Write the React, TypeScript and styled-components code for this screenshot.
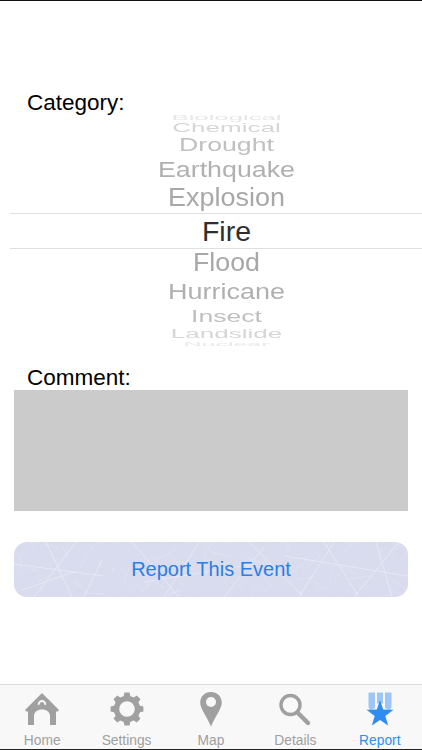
import styled, { createGlobalStyle } from "styled-components"
import type { ReactNode } from "react"

const GlobalStyle = createGlobalStyle`
  html, body {
    margin: 0;
    padding: 0;
    background: #fff;
    font-family: "Liberation Sans", Arial, sans-serif;
  }
`

const Page = styled.div`
  width: 422px;
  height: 750px;
  display: flex;
  flex-direction: column;
  overflow: hidden;
  border-top: 1px solid #111;
  box-sizing: border-box;
  background: #fff;
`

const Content = styled.main`
  flex: 1 1 auto;
  display: flex;
  flex-direction: column;
  padding-top: 89px;
`

const Label = styled.div`
  font-size: 22.5px;
  line-height: 26px;
  color: #000;
  padding-left: 27px;
`

const Picker = styled.div`
  margin: -3px 0 0 10px;
  display: flex;
  flex-direction: column;
`

const PickerRow = styled.div<{ $height: number; $selected?: boolean }>`
  height: ${(p) => p.$height}px;
  flex: 0 0 auto;
  box-sizing: border-box;
  display: flex;
  align-items: center;
  justify-content: center;
  padding-left: 21px;
  overflow: visible;
  ${(p) =>
    p.$selected &&
    `
    border-top: 1px solid #dfdfdf;
    border-bottom: 1px solid #dfdfdf;
  `}
`

const PickerText = styled.span<{ $size: number; $squash: number; $color: string }>`
  font-size: ${(p) => p.$size}px;
  line-height: 1;
  color: ${(p) => p.$color};
  white-space: nowrap;
  transform: scaleY(${(p) => p.$squash});
`

const CommentLabel = styled(Label)`
  margin: 17px 0 -1px;
`

const CommentBox = styled.div`
  height: 121px;
  margin: 0 14px;
  background: #cbcbcb;
`

const ReportButton = styled.button`
  position: relative;
  height: 55px;
  margin: 31px 14px 0;
  padding: 0;
  border: 0;
  border-radius: 13px;
  overflow: hidden;
  background: #d9dcee;
  color: #2b7fe2;
  font-family: inherit;
  font-size: 20px;
`

const Scratches = styled.svg`
  position: absolute;
  inset: 0;
  width: 100%;
  height: 100%;
`

const ButtonText = styled.span`
  position: relative;
`

const TabBar = styled.nav`
  flex: 0 0 auto;
  height: 66px;
  box-sizing: border-box;
  display: grid;
  grid-template-columns: repeat(5, 1fr);
  background: #f8f8f8;
  border-top: 1px solid #dcdcdc;
  border-bottom: 1px solid #222;
`

const Tab = styled.div<{ $active?: boolean }>`
  display: flex;
  flex-direction: column;
  align-items: center;
  padding-top: 7px;
  color: ${(p) => (p.$active ? "#2f8df2" : "#a0a0a0")};
`

const TabIcon = styled.svg`
  width: 36px;
  height: 36px;
  display: block;
`

const TabLabel = styled.span`
  margin-top: 5px;
  font-size: 13.8px;
  line-height: 16px;
`

const wheel = [
  { name: "Biological", height: 9, size: 25.7, squash: 0.26, color: "#e6e6e6" },
  { name: "Chemical", height: 12, size: 26, squash: 0.48, color: "#d6d6d6" },
  { name: "Drought", height: 23, size: 26.7, squash: 0.69, color: "#c0c0c0" },
  { name: "Earthquake", height: 25, size: 26.8, squash: 0.85, color: "#b0b0b0" },
  { name: "Explosion", height: 31, size: 27, squash: 0.95, color: "#a8a8a8" },
  { name: "Fire", height: 36, size: 28.5, squash: 1, color: "#2e2e2e", selected: true },
  { name: "Flood", height: 29, size: 26.8, squash: 0.93, color: "#a8a8a8" },
  { name: "Hurricane", height: 27, size: 27, squash: 0.83, color: "#b0b0b0" },
  { name: "Insect", height: 22, size: 26.6, squash: 0.64, color: "#c0c0c0" },
  { name: "Landslide", height: 14, size: 26, squash: 0.47, color: "#d6d6d6" },
  { name: "Nuclear", height: 7, size: 25, squash: 0.23, color: "#e8e8e8" },
]

// long scratches, then a lot of short ones picked by a small fixed sequence
const scratchLines = [
  "M20 55 L62 0", "M58 55 L32 0", "M70 55 L88 18", "M118 0 L165 55", "M150 55 L185 0",
  "M210 55 L250 5", "M235 0 L290 55", "M285 55 L320 0", "M310 0 L345 55", "M340 55 L385 0",
  "M0 22 L90 34", "M130 40 L240 22", "M270 14 L394 34", "M362 0 L378 55", "M8 48 L60 30",
  ...Array.from({ length: 46 }, (_, i) => {
    const x = (i * 67) % 394
    const y = (i * 23) % 55
    const dx = ((i * 37) % 50) - 25
    const dy = ((i * 41) % 40) - 20
    return `M${x} ${y} L${x + dx} ${y + dy}`
  }),
]

const HomeIcon = () => (
  <TabIcon viewBox="0 0 36 36">
    <path
      fill="currentColor"
      fillRule="evenodd"
      d="M18 1 L35 18 L33 20 L32 19 V33 H26 V24 C26 20 22.5 17.5 18 17.5 C13.5 17.5 10 20 10 24 V33 H4 V19 L3 20 L1 18 Z M18 8 C15.6 8 14 10 13.6 12.5 L15.2 13.2 C15.6 11.4 16.6 10 18 10 C19.4 10 20.4 11.4 20.8 13.2 L22.4 12.5 C22 10 20.4 8 18 8 Z"
    />
  </TabIcon>
)

const SettingsIcon = () => {
  const teeth = [0, 45, 90, 135, 180, 225, 270, 315]
  return (
    <TabIcon viewBox="0 0 36 36">
      <circle cx="18" cy="17" r="10.5" fill="none" stroke="currentColor" strokeWidth="5.4" />
      {teeth.map((a) => (
        <path key={a} d="M14.6 5 L15.4 0.6 H20.6 L21.4 5 Z" fill="currentColor" transform={`rotate(${a} 18 17)`} />
      ))}
    </TabIcon>
  )
}

const MapIcon = () => (
  <TabIcon viewBox="0 0 36 36">
    <path
      fill="currentColor"
      fillRule="evenodd"
      d="M18 0 C24.2 0 28.8 4.6 28.8 10.6 C28.8 17 22 25 18 34.5 C14 25 7.2 17 7.2 10.6 C7.2 4.6 11.8 0 18 0 Z M18 5 A5 5 0 1 0 18 15 A5 5 0 1 0 18 5 Z"
    />
  </TabIcon>
)

const DetailsIcon = () => (
  <TabIcon viewBox="0 0 36 36">
    <circle cx="13.5" cy="13" r="9.5" fill="none" stroke="currentColor" strokeWidth="3.4" />
    <path d="M20.5 20.5 L31 31" stroke="currentColor" strokeWidth="4.4" strokeLinecap="round" />
  </TabIcon>
)

const ReportIcon = () => (
  <TabIcon viewBox="0 0 36 36">
    <g fill="#9cc6f7">
      <path d="M6.5 0.5 H13 V16 L8.5 18 L6.5 15 Z" />
      <rect x="15" y="0.5" width="6" height="11" />
      <path d="M23 0.5 H29.5 V15 L27.5 18 L23 16 Z" />
    </g>
    <path
      fill="currentColor"
      d="M18 8 L21.2 17.5 L31.5 17.8 L23.3 24 L26.2 33.5 L18 28 L9.8 33.5 L12.7 24 L4.5 17.8 L14.8 17.5 Z"
    />
  </TabIcon>
)

const tabs: { label: string; icon: ReactNode; active?: boolean }[] = [
  { label: "Home", icon: <HomeIcon /> },
  { label: "Settings", icon: <SettingsIcon /> },
  { label: "Map", icon: <MapIcon /> },
  { label: "Details", icon: <DetailsIcon /> },
  { label: "Report", icon: <ReportIcon />, active: true },
]

function App() {
  return (
    <Page>
      <GlobalStyle />
      <Content>
        <Label>Category:</Label>
        <Picker>
          {wheel.map((w) => (
            <PickerRow key={w.name} $height={w.height} $selected={w.selected}>
              <PickerText $size={w.size} $squash={w.squash} $color={w.color}>
                {w.name}
              </PickerText>
            </PickerRow>
          ))}
        </Picker>
        <CommentLabel>Comment:</CommentLabel>
        <CommentBox />
        <ReportButton>
          <Scratches viewBox="0 0 394 55" preserveAspectRatio="none">
            <defs>
              <filter id="mottle" x="0" y="0" width="100%" height="100%">
                <feTurbulence type="fractalNoise" baseFrequency="0.18" numOctaves="3" seed="4" />
                <feColorMatrix values="0 0 0 0 0.72  0 0 0 0 0.75  0 0 0 0 0.88  0.9 0 0 0 -0.25" />
              </filter>
              <filter id="soft">
                <feGaussianBlur stdDeviation="0.6" />
              </filter>
            </defs>
            <rect width="394" height="55" filter="url(#mottle)" opacity="0.45" />
            <g filter="url(#soft)" stroke="#eef0f9" fill="none">
              {scratchLines.map((d, i) => (
                <path key={d + i} d={d} strokeWidth={i < 15 ? 1 : 0.7} opacity={i < 15 ? 0.6 : 0.4} />
              ))}
            </g>
          </Scratches>
          <ButtonText>Report This Event</ButtonText>
        </ReportButton>
      </Content>
      <TabBar>
        {tabs.map((t) => (
          <Tab key={t.label} $active={t.active}>
            {t.icon}
            <TabLabel>{t.label}</TabLabel>
          </Tab>
        ))}
      </TabBar>
    </Page>
  )
}

export default App
